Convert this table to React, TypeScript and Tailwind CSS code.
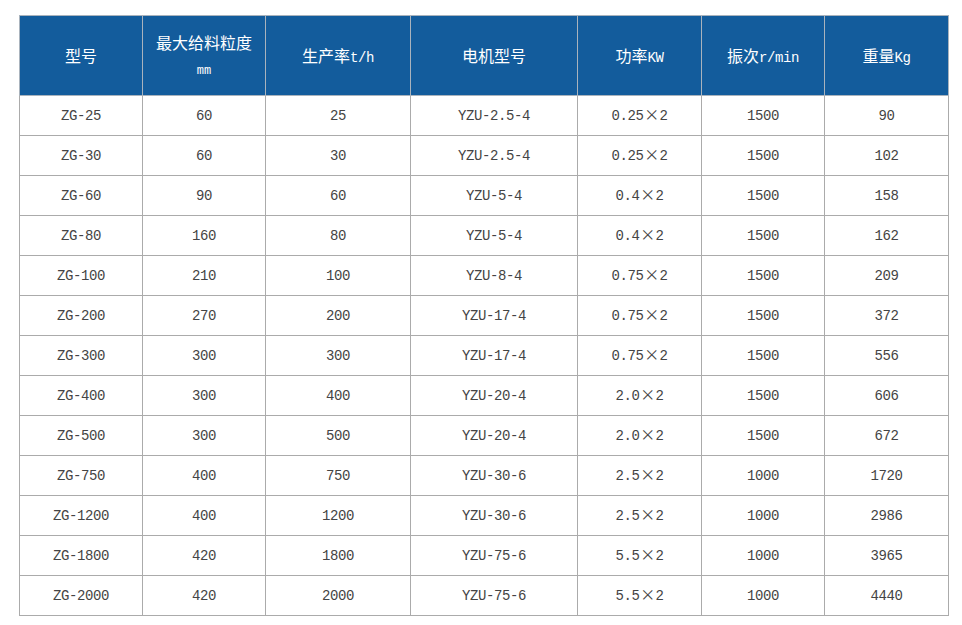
import React from 'react'

type Row = [string, string, string, string, string, string, string]

const ROWS: Row[] = [
  ['ZG-25', '60', '25', 'YZU-2.5-4', '0.25×2', '1500', '90'],
  ['ZG-30', '60', '30', 'YZU-2.5-4', '0.25×2', '1500', '102'],
  ['ZG-60', '90', '60', 'YZU-5-4', '0.4×2', '1500', '158'],
  ['ZG-80', '160', '80', 'YZU-5-4', '0.4×2', '1500', '162'],
  ['ZG-100', '210', '100', 'YZU-8-4', '0.75×2', '1500', '209'],
  ['ZG-200', '270', '200', 'YZU-17-4', '0.75×2', '1500', '372'],
  ['ZG-300', '300', '300', 'YZU-17-4', '0.75×2', '1500', '556'],
  ['ZG-400', '300', '400', 'YZU-20-4', '2.0×2', '1500', '606'],
  ['ZG-500', '300', '500', 'YZU-20-4', '2.0×2', '1500', '672'],
  ['ZG-750', '400', '750', 'YZU-30-6', '2.5×2', '1000', '1720'],
  ['ZG-1200', '400', '1200', 'YZU-30-6', '2.5×2', '1000', '2986'],
  ['ZG-1800', '420', '1800', 'YZU-75-6', '5.5×2', '1000', '3965'],
  ['ZG-2000', '420', '2000', 'YZU-75-6', '5.5×2', '1000', '4440'],
]

const WIDTHS = ['w-[123px]', 'w-[123px]', 'w-[145px]', 'w-[167px]', 'w-[124px]', 'w-[123px]', 'w-[124px]']

const cjk = "font-['Noto_Sans_CJK_SC',sans-serif] text-[16px]"
const mono = "font-['Liberation_Mono',monospace] text-[14px] tracking-[-0.4px]"

// the multiplication sign is full width in the source font
function Cell({ text }: { text: string }) {
  const parts = text.split('×')
  if (parts.length === 1) return <>{text}</>
  return (
    <>
      {parts[0]}
      <span className="inline-block w-4 text-center leading-none font-['Noto_Sans_CJK_SC',sans-serif] text-[15px]">×</span>
      {parts[1]}
    </>
  )
}

function Head({ zh, en }: { zh: string; en?: string }) {
  return (
    <span>
      <span className={cjk}>{zh}</span>
      {en && <span className={mono}>{en}</span>}
    </span>
  )
}

export default function App() {
  return (
    <div className="min-h-[625px] w-[962px] bg-white pl-[19px] pt-[15px]">
      <table className="table-fixed border-collapse w-[929px]">
        <colgroup>
          {WIDTHS.map((w, i) => <col key={i} className={w} />)}
        </colgroup>
        <thead>
          <tr className="h-[80px] bg-[#135c9c] text-white">
            <th className="border border-[#a9b3bd] font-normal"><Head zh="型号" /></th>
            <th className="border border-[#a9b3bd] font-normal">
              <div className="flex flex-col items-center">
                <span className={`${cjk} leading-[22px] -mt-[2px]`}>最大给料粒度</span>
                <span className="font-['Liberation_Mono',monospace] text-[12px] leading-[14px] mt-[11px]">mm</span>
              </div>
            </th>
            <th className="border border-[#a9b3bd] font-normal"><Head zh="生产率" en="t/h" /></th>
            <th className="border border-[#a9b3bd] font-normal"><Head zh="电机型号" /></th>
            <th className="border border-[#a9b3bd] font-normal"><Head zh="功率" en="KW" /></th>
            <th className="border border-[#a9b3bd] font-normal"><Head zh="振次" en="r/min" /></th>
            <th className="border border-[#a9b3bd] font-normal"><Head zh="重量" en="Kg" /></th>
          </tr>
        </thead>
        <tbody>
          {ROWS.map((row, r) => (
            <tr key={r} className="h-[40px]">
              {row.map((c, i) => (
                <td key={i} className={`border border-[#ababab] text-center text-[#444] leading-[20px] ${mono}`}>
                  <Cell text={c} />
                </td>
              ))}
            </tr>
          ))}
        </tbody>
      </table>
    </div>
  )
}
